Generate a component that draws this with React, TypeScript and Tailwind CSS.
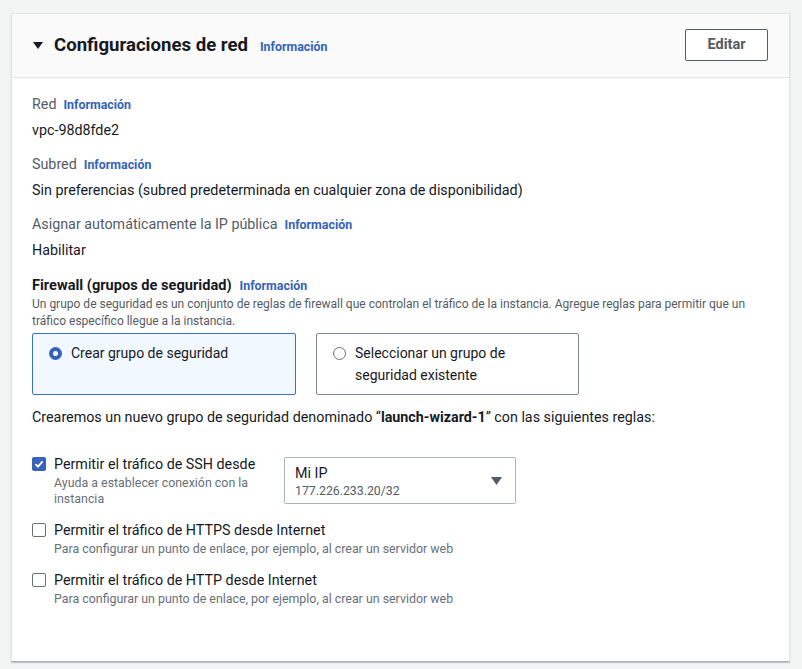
import { useState } from "react";

const Info = () => <span className="ml-[7px] text-[12.4px] font-bold text-[#3363b9]">Información</span>;

type FieldProps = {
    label: string;
    value: string;
};

const Field = ({ label, value }: FieldProps) => (
    <div className="flex flex-col">
        <div className="flex h-5 items-center text-[14.3px] text-[#545b64]">
            {label}
            <Info />
        </div>
        <div className="mt-[6px] flex h-5 items-center text-[14.3px] text-[#16191f]">{value}</div>
    </div>
);

type CheckProps = {
    checked: boolean;
    label: string;
    hint: React.ReactNode;
};

const Check = ({ checked, label, hint }: CheckProps) => (
    <div className="flex gap-[8px]">
        {checked ? (
            <span className="mt-[4px] flex h-[14px] w-[14px] shrink-0 items-center justify-center rounded-[2px] bg-[#3762b9]">
                <svg width="10" height="10" viewBox="0 0 10 10" fill="none">
                    <path d="M1.5 5.2 4 7.6 8.6 2.4" stroke="white" strokeWidth="1.8" />
                </svg>
            </span>
        ) : (
            <span className="mt-[4px] h-[14px] w-[14px] shrink-0 rounded-[2px] border border-[#687078] bg-white" />
        )}
        <div className="flex flex-col">
            <span className="text-[14.3px] leading-[22px] text-[#16191f]">{label}</span>
            <span className="text-[12.4px] leading-4 text-[#687078]">{hint}</span>
        </div>
    </div>
);

export default function App() {
    const [mode, setMode] = useState("crear");

    return (
        <div className="min-h-[669px] bg-[#f2f3f3] px-[11px] pt-[13px] font-['Roboto',sans-serif]">
            <div className="h-[649px] w-[779px] border border-[#e3e5e5] border-b-[#aab0b4] bg-white shadow-[0_1px_1px_rgba(0,28,36,0.2)]">
                <div className="flex h-[64px] items-center border-b border-[#e4e6e6] bg-[#fafafa] pl-[21px] pr-[21px]">
                    <svg width="10" height="8" viewBox="0 0 10 8" className="mr-[11px]">
                        <path d="M0 0h10L5 7z" fill="#16191f" />
                    </svg>
                    <h2 className="text-[18.6px] font-bold text-[#16191f]">Configuraciones de red</h2>
                    <span className="ml-[12px] mt-[3px] text-[12.4px] font-bold text-[#3363b9]">Información</span>
                    <button className="ml-auto mt-[-1px] h-[32px] w-[83px] rounded-[2px] border border-[#545b64] bg-white text-[14.5px] font-bold text-[#545b64]">Editar</button>
                </div>

                <div className="flex flex-col px-[20px] pt-[17px]">
                    <div className="flex flex-col gap-[14px]">
                        <Field label="Red" value="vpc-98d8fde2" />
                        <Field label="Subred" value="Sin preferencias (subred predeterminada en cualquier zona de disponibilidad)" />
                        <Field label="Asignar automáticamente la IP pública" value="Habilitar" />
                    </div>

                    <div className="mt-[15px]">
                        <div className="flex h-5 items-center text-[14.6px] font-bold text-[#16191f]">
                            Firewall (grupos de seguridad)
                            <span className="ml-[8px] text-[12.4px] font-bold text-[#3363b9]">Información</span>
                        </div>
                        <p className="text-[12px] leading-[17px] text-[#545b64]">
                            Un grupo de seguridad es un conjunto de reglas de firewall que controlan el tráfico de la instancia. Agregue reglas para permitir que un tráfico específico llegue a la instancia.
                        </p>
                        <div className="mt-[3px] flex gap-[20px]">
                            <button
                                onClick={() => setMode("crear")}
                                className={`flex h-[62px] w-[264px] items-start gap-[9px] rounded-[2px] border pl-[16px] pt-[8px] text-left ${mode === "crear" ? "border-[#3a73c8] bg-[#f1f8ff]" : "border-[#aab7b8] bg-white"}`}
                            >
                                <span className={`mt-[5px] h-[13px] w-[13px] shrink-0 rounded-full ${mode === "crear" ? "border-[4px] border-[#3762b9] bg-white" : "border border-[#687078] bg-white"}`} />
                                <span className="text-[14px] leading-[22px] text-[#16191f]">Crear grupo de seguridad</span>
                            </button>
                            <button
                                onClick={() => setMode("existente")}
                                className={`flex h-[62px] w-[263px] items-start gap-[9px] rounded-[2px] border pl-[16px] pt-[8px] text-left ${mode === "existente" ? "border-[#3a73c8] bg-[#f1f8ff]" : "border-[#7d8998] bg-white"}`}
                            >
                                <span className={`mt-[5px] h-[13px] w-[13px] shrink-0 rounded-full ${mode === "existente" ? "border-[4px] border-[#3762b9] bg-white" : "border border-[#687078] bg-white"}`} />
                                <span className="text-[14px] leading-[22px] text-[#16191f]">
                                    Seleccionar un grupo de
                                    <br />
                                    seguridad existente
                                </span>
                            </button>
                        </div>
                    </div>

                    <p className="mt-[12px] text-[14.3px] leading-5 text-[#16191f]">
                        Crearemos un nuevo grupo de seguridad denominado “<b>launch-wizard-1</b>” con las siguientes reglas:
                    </p>

                    <div className="mt-[26px] flex flex-col gap-[12px]">
                        <div className="flex">
                            <div className="w-[252px]">
                                <Check
                                    checked
                                    label="Permitir el tráfico de SSH desde"
                                    hint={
                                        <>
                                            Ayuda a establecer conexión con la
                                            <br />
                                            instancia
                                        </>
                                    }
                                />
                            </div>
                            <div className="mt-[4px] flex h-[47px] w-[232px] items-center justify-between rounded-[2px] border border-[#aab7b8] pl-[10px] pr-[13px]">
                                <div className="flex flex-col">
                                    <span className="text-[14.3px] leading-5 text-[#16191f]">Mi IP</span>
                                    <span className="text-[12.3px] leading-4 text-[#545b64]">177.226.233.20/32</span>
                                </div>
                                <svg width="11" height="8" viewBox="0 0 11 8">
                                    <path d="M0 0h11L5.5 8z" fill="#545b64" />
                                </svg>
                            </div>
                        </div>
                        <Check checked={false} label="Permitir el tráfico de HTTPS desde Internet" hint="Para configurar un punto de enlace, por ejemplo, al crear un servidor web" />
                        <Check checked={false} label="Permitir el tráfico de HTTP desde Internet" hint="Para configurar un punto de enlace, por ejemplo, al crear un servidor web" />
                    </div>
                </div>
            </div>
        </div>
    );
}
